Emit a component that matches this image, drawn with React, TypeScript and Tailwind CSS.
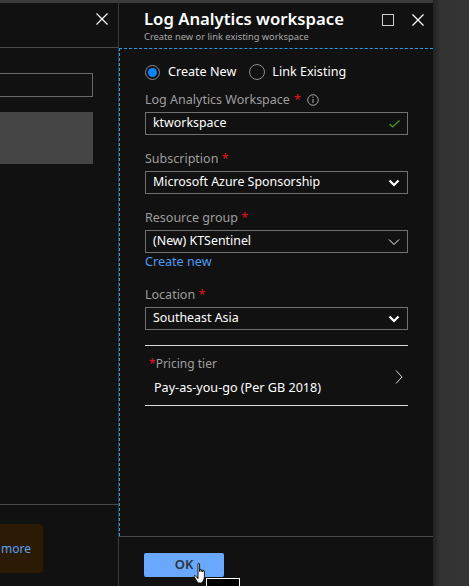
import React from 'react';

const font = { fontFamily: '"Noto Sans", "Open Sans", "Liberation Sans", sans-serif' };

function ChevronDown({ thin }: { thin?: boolean }) {
  return (
    <svg width="12" height="8" viewBox="0 0 12 8" className="shrink-0">
      <path
        d={thin ? 'M1 1.5 L6 6.5 L11 1.5' : 'M1.5 1.5 L6 6 L10.5 1.5'}
        fill="none"
        stroke="#ffffff"
        strokeWidth={thin ? 1 : 2.2}
      />
    </svg>
  );
}

function Field({ label, children }: { label: string; children: React.ReactNode }) {
  return (
    <div>
      <div className="text-[12.5px] leading-[18px] text-[#9e9e9e]">
        {label} <span className="text-[#e81123]">*</span>
      </div>
      <div className="mt-[3px]">{children}</div>
    </div>
  );
}

function Select({ value, thin }: { value: string; thin?: boolean }) {
  return (
    <div className="flex h-[23px] items-center justify-between border border-[#707070] pl-[7px] pr-[7px] text-[12.4px] text-white">
      <span>{value}</span>
      <ChevronDown thin={thin} />
    </div>
  );
}

export default function App() {
  return (
    <div className="flex h-[586px] w-[469px] overflow-hidden bg-[#111111]" style={font}>
      {/* left blade */}
      <div className="flex w-[118px] shrink-0 flex-col">
        <div className="h-[3px] bg-[#3c3c3c]" />
        <div className="flex h-[45px] items-start justify-end border-b border-[#4a4a4a] pr-[10px] pt-[10px]">
          <svg width="12" height="12" viewBox="0 0 12 12">
            <path d="M0.5 0.5 L11.5 11.5 M11.5 0.5 L0.5 11.5" stroke="#ffffff" strokeWidth="1.2" />
          </svg>
        </div>
        <div className="mt-[25px] h-[24px] w-[93px] border border-[#6a6a6a] border-l-0" />
        <div className="mt-[15px] h-[52px] w-[93px] bg-[#454545]" />
        <div className="flex-1" />
        <div className="h-[82px] border-t border-[#4a4a4a] pt-[19px]">
          <div className="flex h-[49px] w-[43px] items-center rounded-r-sm bg-[#2b1a04] pl-[1px] text-[12px] text-[#5aa0f5]">
            more
          </div>
        </div>
      </div>

      {/* right blade */}
      <div className="flex w-[315px] shrink-0 flex-col border-l border-[#3a3a3a]">
        <div className="h-[3px] bg-[#3c3c3c]" />
        <div className="flex h-[45px] items-start justify-between pl-[25px] pr-[9px]">
          <div className="pt-[5px]">
            <div className="text-[16.7px] font-semibold leading-[22px] text-white">Log Analytics workspace</div>
            <div className="text-[9.3px] leading-[13px] text-[#a8a8a8]">Create new or link existing workspace</div>
          </div>
          <div className="flex items-center gap-[18px] pt-[11px]">
            <div className="h-[12px] w-[12px] border border-[#d0d0d0]" />
            <svg width="12" height="12" viewBox="0 0 12 12">
              <path d="M0.5 0.5 L11.5 11.5 M11.5 0.5 L0.5 11.5" stroke="#ffffff" strokeWidth="1.2" />
            </svg>
          </div>
        </div>

        <div className="flex-1 border-l border-t border-dashed border-l-[#1aa3e8] border-t-[#1aa3e8] pl-[25px] pr-[25px] pt-[13px]">
          {/* radios */}
          <div className="flex h-[20px] items-center text-[12.6px] text-white">
            <div className="flex h-[15px] w-[15px] items-center justify-center rounded-full border border-[#8a8a8a]">
              <div className="h-[9px] w-[9px] rounded-full bg-[#0a84ff]" />
            </div>
            <span className="ml-[8px]">Create New</span>
            <div className="ml-[13px] h-[16px] w-[16px] rounded-full border border-[#8a8a8a]" />
            <span className="ml-[7px]">Link Existing</span>
          </div>

          <div className="mt-[9px]">
            <div className="flex items-center text-[12.5px] leading-[18px] text-[#9e9e9e]">
              Log Analytics Workspace <span className="ml-[4px] text-[#e81123]">*</span>
              <svg width="12" height="12" viewBox="0 0 12 12" className="ml-[6px]">
                <circle cx="6" cy="6" r="5.3" fill="none" stroke="#a0a0a0" strokeWidth="1" />
                <path d="M6 5 V9" stroke="#a0a0a0" strokeWidth="1.1" />
                <circle cx="6" cy="3.3" r="0.7" fill="#a0a0a0" />
              </svg>
            </div>
            <div className="mt-[3px] flex h-[23px] items-center justify-between border border-[#707070] pl-[7px] pr-[7px] text-[12.4px] text-white">
              <span>ktworkspace</span>
              <svg width="11" height="8" viewBox="0 0 11 8">
                <path d="M0.5 4 L3.5 7 L10.5 0.5" fill="none" stroke="#4f9a1a" strokeWidth="1.2" />
              </svg>
            </div>
          </div>

          <div className="mt-[15px]">
            <Field label="Subscription">
              <Select value="Microsoft Azure Sponsorship" />
            </Field>
          </div>

          <div className="mt-[15px]">
            <Field label="Resource group">
              <Select value="(New) KTSentinel" thin />
            </Field>
            <div className="text-[12.6px] leading-[18px] text-[#4d9bf0]">Create new</div>
          </div>

          <div className="mt-[15px]">
            <Field label="Location">
              <Select value="Southeast Asia" />
            </Field>
          </div>

          <div className="mt-[15px] border-b border-t border-[#d8d8d8]">
            <div className="flex items-center justify-between pb-[8px] pl-[4px] pr-[5px] pt-[10px]">
              <div>
                <div className="text-[12px] leading-[16px] text-[#9e9e9e]">
                  <span className="text-[#e81123]">*</span>Pricing tier
                </div>
                <div className="mt-[7px] pl-[5px] text-[12.6px] leading-[18px] text-white">Pay-as-you-go (Per GB 2018)</div>
              </div>
              <svg width="8" height="14" viewBox="0 0 8 14">
                <path d="M1 0.5 L7 7 L1 13.5" fill="none" stroke="#d8d8d8" strokeWidth="1" />
              </svg>
            </div>
          </div>
        </div>

        <div className="relative h-[50px] border-t border-[#4a4a4a] pl-[25px] pt-[16px]">
          <div className="flex h-[24px] w-[80px] items-center justify-center rounded-[2px] bg-[#6aa8fd] text-[13px] font-semibold text-[#2b3440]">
            OK
          </div>
          {/* tooltip + cursor overlay */}
          <div className="absolute left-[87px] top-[41px] h-[12px] w-[34px] border border-white bg-black" />
          <svg width="16" height="23" viewBox="0 0 16 22" className="absolute left-[74px] top-[25px]">
            <path
              d="M5 1.5 C5 0.7 6.6 0.7 6.6 1.5 V9 V7.5 C6.6 6.7 8.2 6.7 8.2 7.5 V9 V8 C8.2 7.2 9.8 7.2 9.8 8 V9.5 V8.8 C9.8 8 11.4 8 11.4 8.8 V14 C11.4 17 10 19 8.5 20.5 H5 L1.2 14.5 C0.6 13.5 1.6 12.5 2.5 13.3 L5 16 Z"
              fill="#ffffff"
              stroke="#000000"
              strokeWidth="0.9"
              strokeLinejoin="round"
            />
          </svg>
        </div>
      </div>

      {/* gutter */}
      <div className="flex-1 bg-gradient-to-r from-[#222222] via-[#333333] via-20% to-[#343434]" />
    </div>
  );
}
